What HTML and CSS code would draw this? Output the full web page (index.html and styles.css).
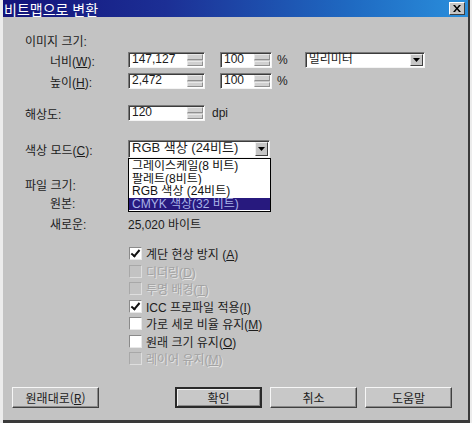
FILE: index.html
```html
<!DOCTYPE html>
<html lang="ko">

<head>
    <meta charset="UTF-8">
    <meta name="viewport" content="width=device-width, initial-scale=1.0">
    <title>비트맵으로 변환</title>

    <link rel="stylesheet" href="styles.css">
</head>

<body>
    <div class="dialog">
        <div class="titlebar">
            <span class="title">비트맵으로 변환</span>
            <span class="close">
                <svg width="8" height="7" viewBox="0 0 8 7"><path d="M0 0h2l2 2.5L6 0h2L5 3.5 8 7H6L4 4.5 2 7H0l3-3.5z" fill="#000"/></svg>
            </span>
        </div>

        <div class="content">
            <div class="row head">이미지 크기:</div>

            <div class="row r-width">
                <span class="lbl sub">너비(<u>W</u>):</span>
                <span class="spin size-a"><span class="val">147,127</span><span class="arrows"><i></i><i></i></span></span>
                <span class="spin size-b"><span class="val">100</span><span class="arrows"><i></i><i></i></span></span>
                <span class="unit">%</span>
                <span class="combo size-c">
                    <span class="val">밀리미터</span>
                    <span class="drop"><svg width="7" height="4" viewBox="0 0 7 4"><path d="M0 0h7L3.5 4z" fill="#000"/></svg></span>
                </span>
            </div>

            <div class="row r-height">
                <span class="lbl sub">높이(<u>H</u>):</span>
                <span class="spin size-a"><span class="val">2,472</span><span class="arrows"><i></i><i></i></span></span>
                <span class="spin size-b"><span class="val">100</span><span class="arrows"><i></i><i></i></span></span>
                <span class="unit">%</span>
            </div>

            <div class="row r-res">
                <span class="lbl">해상도:</span>
                <span class="spin size-a"><span class="val">120</span><span class="arrows"><i></i><i></i></span></span>
                <span class="unit dpi">dpi</span>
            </div>

            <div class="row r-mode">
                <span class="lbl">색상 모드(<u>C</u>):</span>
                <span class="combo size-d">
                    <span class="val">RGB 색상 (24비트)</span>
                    <span class="drop"><svg width="7" height="4" viewBox="0 0 7 4"><path d="M0 0h7L3.5 4z" fill="#000"/></svg></span>
                    <ul class="listbox">
                        <li>그레이스케일(8 비트)</li>
                        <li>팔레트(8비트)</li>
                        <li>RGB 색상 (24비트)</li>
                        <li class="selected">CMYK 색상(32 비트)</li>
                    </ul>
                </span>
            </div>

            <div class="row r-file">파일 크기:</div>
            <div class="row r-orig"><span class="lbl sub">원본:</span></div>
            <div class="row r-new"><span class="lbl sub">새로운:</span><span>25,020 바이트</span></div>

            <div class="checks">
                <div class="check"><span class="box on"></span><span>계단 현상 방지 (<u>A</u>)</span></div>
                <div class="check disabled"><span class="box"></span><span>디더링(<u>D</u>)</span></div>
                <div class="check disabled"><span class="box"></span><span>투명 배경(<u>T</u>)</span></div>
                <div class="check"><span class="box on"></span><span>ICC 프로파일 적용(<u>I</u>)</span></div>
                <div class="check"><span class="box"></span><span>가로 세로 비율 유지(<u>M</u>)</span></div>
                <div class="check"><span class="box"></span><span>원래 크기 유지(<u>O</u>)</span></div>
                <div class="check disabled"><span class="box"></span><span>레이어 유지(<u>M</u>)</span></div>
            </div>

            <div class="buttons">
                <button class="btn">원래대로(<u>R</u>)</button>
                <div class="btn-group">
                    <button class="btn default">확인</button>
                    <button class="btn">취소</button>
                    <button class="btn">도움말</button>
                </div>
            </div>
        </div>
    </div>
</body>

</html>
```

FILE: styles.css
```css
body {
    margin: 0;
    padding: 0;
    background-color: #ececec;
    font-family: 'Liberation Sans', 'Noto Sans CJK KR', sans-serif;
    font-size: 12px;
    color: #1c1c1c;
}

.dialog {
    margin-left: 3px;
    width: 467px;
    height: 423px;
    box-sizing: border-box;
    background-color: #c3c3c3;
    border-right: 2px solid #3a3a3a;
    border-bottom: 3px solid #3a3a3a;
    display: flex;
    flex-direction: column;
}

.titlebar {
    height: 17px;
    display: flex;
    align-items: center;
    justify-content: space-between;
    padding: 0 3px 0 1px;
    background: linear-gradient(to right, #13137a, #1c2f95 35%, #1f6ac2 75%, #2a8fdc);
}

.title {
    color: #fff;
    font-family: 'Noto Sans CJK KR', sans-serif;
    font-size: 14px;
    line-height: 16px;
    white-space: nowrap;
}

.close {
    width: 14px;
    height: 11px;
    background-color: #c6c6c6;
    border: 1px solid;
    border-color: #fff #404040 #404040 #fff;
    display: flex;
    align-items: center;
    justify-content: center;
}

.content {
    flex: 1;
    padding: 0 0 0 22px;
    position: relative;
}

.row {
    display: flex;
    align-items: center;
    height: 16px;
}

.head { margin-top: 15px; }
.r-width { margin-top: 4px; }
.r-height { margin-top: 5px; }
.r-res { margin-top: 16px; }
.r-mode { margin-top: 19px; height: 18px; }
.r-file { margin-top: 18px; }
.r-orig { margin-top: 2px; }
.r-new { margin-top: 5px; }

.lbl {
    width: 103px;
    flex: none;
    box-sizing: border-box;
}

.lbl.sub {
    padding-left: 25px;
}

.spin,
.combo {
    display: flex;
    height: 16px;
    box-sizing: border-box;
    background-color: #fff;
    border: 1px solid;
    border-color: #7a7a7a #f4f4f4 #f4f4f4 #7a7a7a;
    box-shadow: inset 1px 1px 0 #3c3c3c;
}

.size-a { width: 77px; }
.size-b { width: 52px; margin-left: 15px; }
.size-c { width: 120px; margin-left: 17px; }
.size-d { width: 142px; height: 18px; position: relative; }

.val {
    flex: 1;
    padding: 0 0 2px 3px;
    line-height: 13px;
    white-space: nowrap;
}

.arrows {
    width: 16px;
    margin: 1px 1px 1px 2px;
    display: flex;
    flex-direction: column;
    gap: 1px;
    background-color: #c8c8c8;
}

.arrows i {
    flex: 1;
    border: 1px solid;
    border-color: #e8e8e8 #909090 #909090 #e8e8e8;
    background-color: #d0d0d0;
}

.unit {
    margin-left: 5px;
}

.unit.dpi {
    margin-left: 7px;
}

.drop {
    width: 13px;
    margin: 1px 1px 1px 0;
    background-color: #c6c6c6;
    border: 1px solid;
    border-color: #f0f0f0 #404040 #404040 #f0f0f0;
    box-sizing: border-box;
    display: flex;
    align-items: center;
    justify-content: center;
}

.size-d .val {
    font-size: 13px;
}

.listbox {
    position: absolute;
    left: -1px;
    top: 17px;
    width: 143px;
    margin: 0;
    padding: 1px 0;
    list-style: none;
    background-color: #fff;
    border: 1px solid #000;
    box-sizing: border-box;
    font-size: 12px;
    line-height: 12.5px;
    color: #111;
}

.listbox li {
    height: 12.5px;
    padding-left: 3px;
    white-space: nowrap;
    overflow: hidden;
}

.listbox li.selected {
    background-color: #27197e;
    color: #a9b4e8;
}

.checks {
    margin-top: 14px;
    padding-left: 104px;
}

.check {
    height: 17.5px;
    display: flex;
    align-items: center;
    gap: 4px;
}

.box {
    width: 13px;
    height: 13px;
    box-sizing: border-box;
    background-color: #fff;
    border: 1px solid;
    border-color: #8a8a8a #e8e8e8 #e8e8e8 #8a8a8a;
    position: relative;
}

.box.on::after {
    content: "";
    position: absolute;
    left: 3px;
    top: 0;
    width: 3px;
    height: 7px;
    border: solid #111;
    border-width: 0 2px 2px 0;
    transform: rotate(40deg);
}

.check.disabled {
    color: #a2a2a2;
    text-shadow: 1px 1px 0 #e4e4e4;
}

.check.disabled .box {
    background-color: #c3c3c3;
    border-color: #a8a8a8 #dedede #dedede #a8a8a8;
}

.buttons {
    margin: 19px 0 0 -13px;
    display: flex;
    justify-content: space-between;
    padding-right: 16px;
}

.btn-group {
    display: flex;
    gap: 8px;
}

.btn {
    width: 87px;
    height: 21px;
    padding: 0;
    font-family: 'Noto Sans CJK KR', sans-serif;
    font-size: 12px;
    color: #1c1c1c;
    background-color: #c8c8c8;
    border: 1px solid;
    border-color: #f6f6f6 #404040 #404040 #f6f6f6;
    box-shadow: inset -1px -1px 0 #8a8a8a;
}

.btn.default {
    border: 2px solid #2a2a2a;
    box-shadow: inset 1px 1px 0 #f0f0f0, inset -1px -1px 0 #8a8a8a;
}
```
